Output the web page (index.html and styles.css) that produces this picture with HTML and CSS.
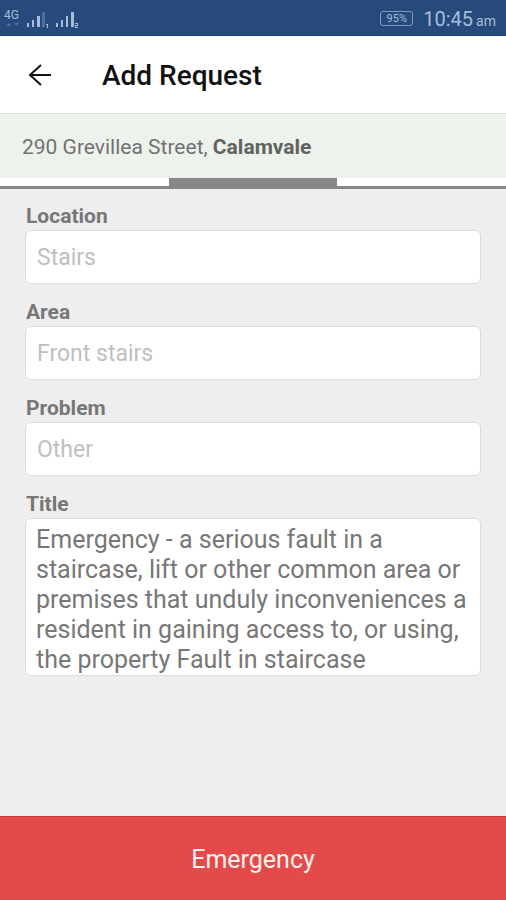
FILE: index.html
```html
<!DOCTYPE html>
<html lang="en">
<head>
<meta charset="utf-8">
<meta name="viewport" content="width=device-width, initial-scale=1">
<title>Add Request</title>
<link rel="stylesheet" href="styles.css">
</head>
<body>
<div class="status-bar">
  <div class="network">
    <span class="network-type">4G</span>
    <svg class="signals" width="76" height="24" viewBox="0 0 76 24" aria-hidden="true">
      <g fill="#4d709c">
        <path d="M2 19l3-3 2 3zM10 16h5l-3 3z"/>
        <path d="M38 5h3v15h-3z"/>
      </g>
      <g fill="#a5bddb">
        <path d="M23 16h2v4h-2zM28 13h2v7h-2zM33 9h3v11h-3z"/>
        <path d="M42 17h2v4h-1v-3h-1z"/>
        <path d="M52 16h2v4h-2zM57 13h2v7h-2zM62 9h2v11h-2zM67 5h3v15h-3z"/>
        <path d="M71 16h3v3h-2v1h2v1h-3v-3h2v-1h-2z"/>
      </g>
    </svg>
  </div>
  <div class="clock"><span class="battery">95%</span><span class="time">10:45</span><span class="meridiem">am</span></div>
</div>
<header class="toolbar">
  <button class="back" type="button" aria-label="Back">
    <svg width="24" height="24" viewBox="0 0 24 24" fill="none" stroke="#111" stroke-width="2" aria-hidden="true"><path d="M23 12H2M13 2L2 12l11 10"/></svg>
  </button>
  <h1>Add Request</h1>
</header>
<p class="address">290 Grevillea Street, <strong>Calamvale</strong></p>
<div class="steps"><span class="step-current"></span></div>
<form class="request">
  <div class="fields">
    <div class="field"><label for="location">Location</label><input id="location" type="text" placeholder="Stairs"></div>
    <div class="field"><label for="area">Area</label><input id="area" type="text" placeholder="Front stairs"></div>
    <div class="field"><label for="problem">Problem</label><input id="problem" type="text" placeholder="Other"></div>
    <div class="field"><label for="title">Title</label><textarea id="title" rows="5">Emergency - a serious fault in a staircase, lift or other common area or premises that unduly inconveniences a resident in gaining access to, or using, the property Fault in staircase</textarea></div>
  </div>
  <button class="emergency" type="button">Emergency</button>
</form>
</body>
</html>
```
FILE: styles.css
```css
* { box-sizing: border-box; }

body {
  margin: 0;
  min-height: 100vh;
  display: flex;
  flex-direction: column;
  background: #eee;
  color: #777;
  font-family: Roboto, "Liberation Sans", sans-serif;
}

button, input, textarea { font: inherit; }

.status-bar {
  height: 36px;
  padding: 2px 10px 0 4px;
  display: flex;
  align-items: center;
  justify-content: space-between;
  background: #254a7b;
  border-bottom: 1px solid #1c3c69;
  color: #a5bddb;
}

.network { display: grid; }
.network > * { grid-area: 1 / 1; }
.network-type { font-size: 12px; line-height: 18px; }
.signals { margin-top: 1px; }

.clock { display: flex; align-items: center; }

.battery {
  width: 33px;
  margin-right: 10px;
  border: 1px solid #7f9bc0;
  border-radius: 3px;
  font-size: 11px;
  line-height: 13px;
  text-align: center;
}

.time { font-size: 20px; line-height: 24px; }
.meridiem { margin-left: 3px; font-size: 14px; line-height: 20px; padding-top: 4px; }

.toolbar {
  height: 78px;
  padding: 0 28px;
  display: flex;
  align-items: center;
  gap: 50px;
  background: #fff;
  border-bottom: 1px solid #dcdfdc;
}

.back {
  display: flex;
  padding: 0;
  border: 0;
  background: none;
}

h1 {
  margin: 0;
  padding-top: 2px;
  color: #111;
  font-size: 28px;
  font-weight: 500;
  line-height: 32px;
}

.address {
  margin: 0;
  padding: 21px 22px 19px;
  background: #edf2ec;
  color: #707370;
  font-size: 21px;
  line-height: 24px;
}

.address strong { color: #606360; }

.steps {
  height: 11px;
  display: grid;
  grid-template-columns: repeat(3, 1fr);
  background: #fff;
  border-bottom: 3px solid #878787;
}

.step-current { grid-column: 2; background: #878787; }

.request {
  flex: 1;
  display: flex;
  flex-direction: column;
}

.fields {
  flex: 1;
  padding: 15px 25px 24px;
  display: flex;
  flex-direction: column;
  gap: 16px;
}

.field { display: flex; flex-direction: column; }

label {
  padding-bottom: 2px;
  padding-left: 1px;
  font-size: 21px;
  font-weight: 700;
  line-height: 24px;
}

input, textarea {
  display: block;
  width: 100%;
  margin: 0;
  background: #fff;
  border: 1px solid #dcdcdc;
  border-radius: 6px;
  color: #777;
}

input {
  height: 54px;
  padding: 0 11px;
  font-size: 23px;
}

input::placeholder { color: #bfbfbf; opacity: 1; }

textarea {
  padding: 6px 5px 0 10px;
  font-size: 25px;
  line-height: 30px;
  resize: none;
  overflow: hidden;
}

.emergency {
  height: 84px;
  padding: 2px 0 0;
  border: 0;
  border-top: 1px solid #c93434;
  background: #e44a4a;
  color: #fff0ec;
  font-size: 25px;
}
```
